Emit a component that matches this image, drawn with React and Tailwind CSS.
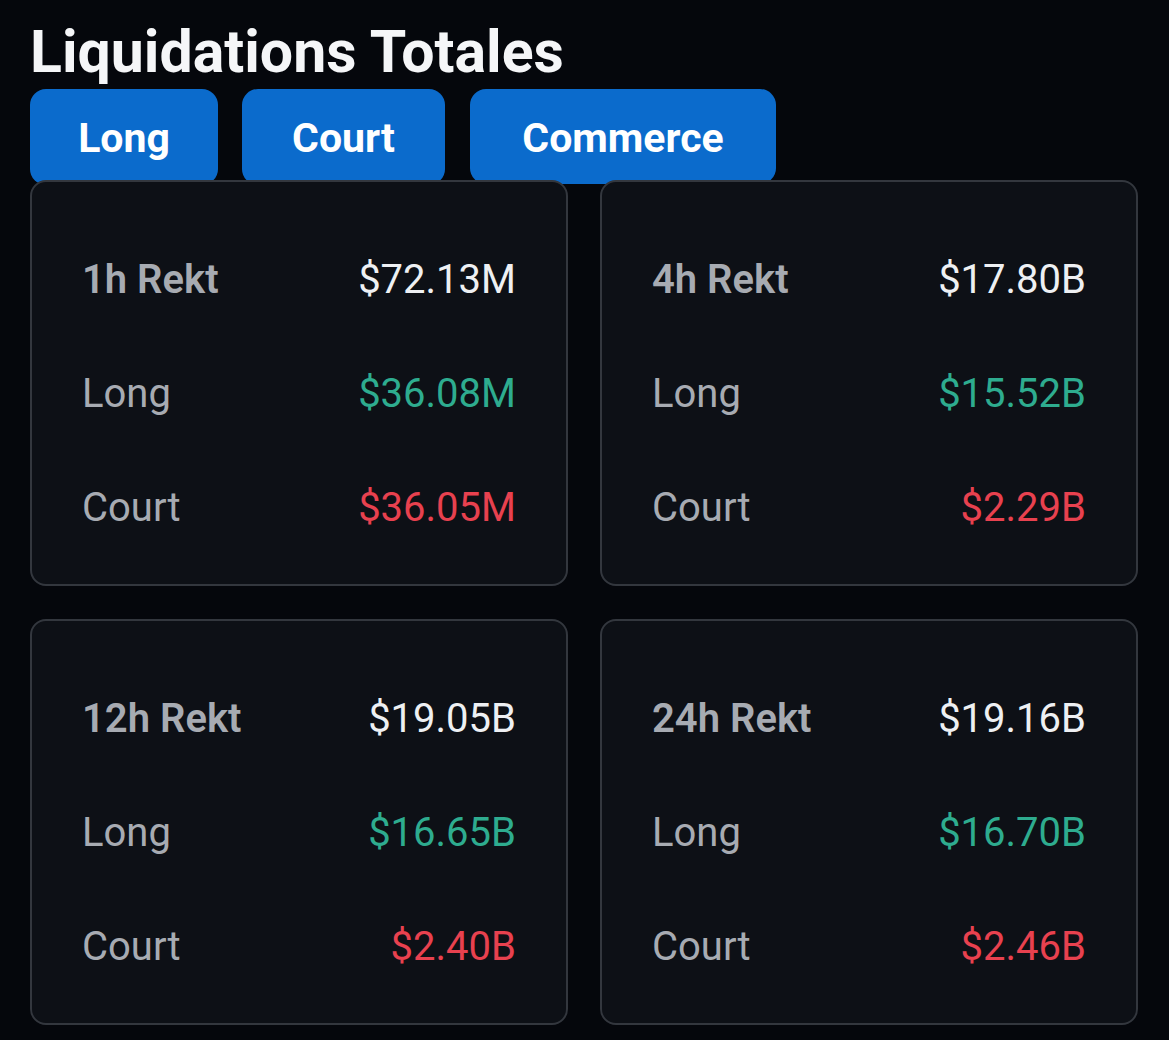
import React from "react";

const cards = [
  { label: "1h Rekt", total: "$72.13M", long: "$36.08M", short: "$36.05M" },
  { label: "4h Rekt", total: "$17.80B", long: "$15.52B", short: "$2.29B" },
  { label: "12h Rekt", total: "$19.05B", long: "$16.65B", short: "$2.40B" },
  { label: "24h Rekt", total: "$19.16B", long: "$16.70B", short: "$2.46B" },
];

const Card = ({ item }) => (
  <div className="relative z-10 h-[406px] rounded-[16px] border-2 border-[#33373e] bg-[#0d1016] px-[50px] pt-[70px]">
    <div className="flex h-[56px] items-center justify-between">
      <span className="text-[40px] font-semibold text-[#a7abb2]">{item.label}</span>
      <span className="text-[40px] text-[#eef0f3]">{item.total}</span>
    </div>
    <div className="mt-[58px] flex h-[56px] items-center justify-between">
      <span className="text-[40px] text-[#a7abb2]">Long</span>
      <span className="text-[40px] text-[#2eac8f]">{item.long}</span>
    </div>
    <div className="mt-[58px] flex h-[56px] items-center justify-between">
      <span className="text-[40px] text-[#a7abb2]">Court</span>
      <span className="text-[40px] text-[#e8414f]">{item.short}</span>
    </div>
  </div>
);

export default function App() {
  return (
    <div
      className="min-h-[1040px] w-[1169px] bg-[#05070c] pl-[30px] pr-[31px] pt-[14px]"
      style={{ fontFamily: "Roboto, 'Noto Sans', sans-serif" }}
    >
      <h1 className="h-[75px] text-[59px] font-bold leading-[75px] tracking-[0px] text-[#f5f6f8]">
        Liquidations Totales
      </h1>
      <div className="flex h-[91px] items-start">
        <button className="h-[96px] w-[188px] rounded-[16px] bg-[#0b6bcc] pt-[4px] text-[41px] font-bold text-white">
          Long
        </button>
        <button className="ml-[24px] h-[96px] w-[203px] rounded-[16px] bg-[#0b6bcc] pt-[4px] text-[41px] font-bold text-white">
          Court
        </button>
        <button className="ml-[25px] h-[95px] w-[306px] rounded-[16px] bg-[#0b6bcc] pt-[4px] text-[41px] font-bold text-white">
          Commerce
        </button>
      </div>
      <div className="grid grid-cols-2 gap-x-[32px] gap-y-[33px]">
        {cards.map((c) => (
          <Card key={c.label} item={c} />
        ))}
      </div>
    </div>
  );
}
